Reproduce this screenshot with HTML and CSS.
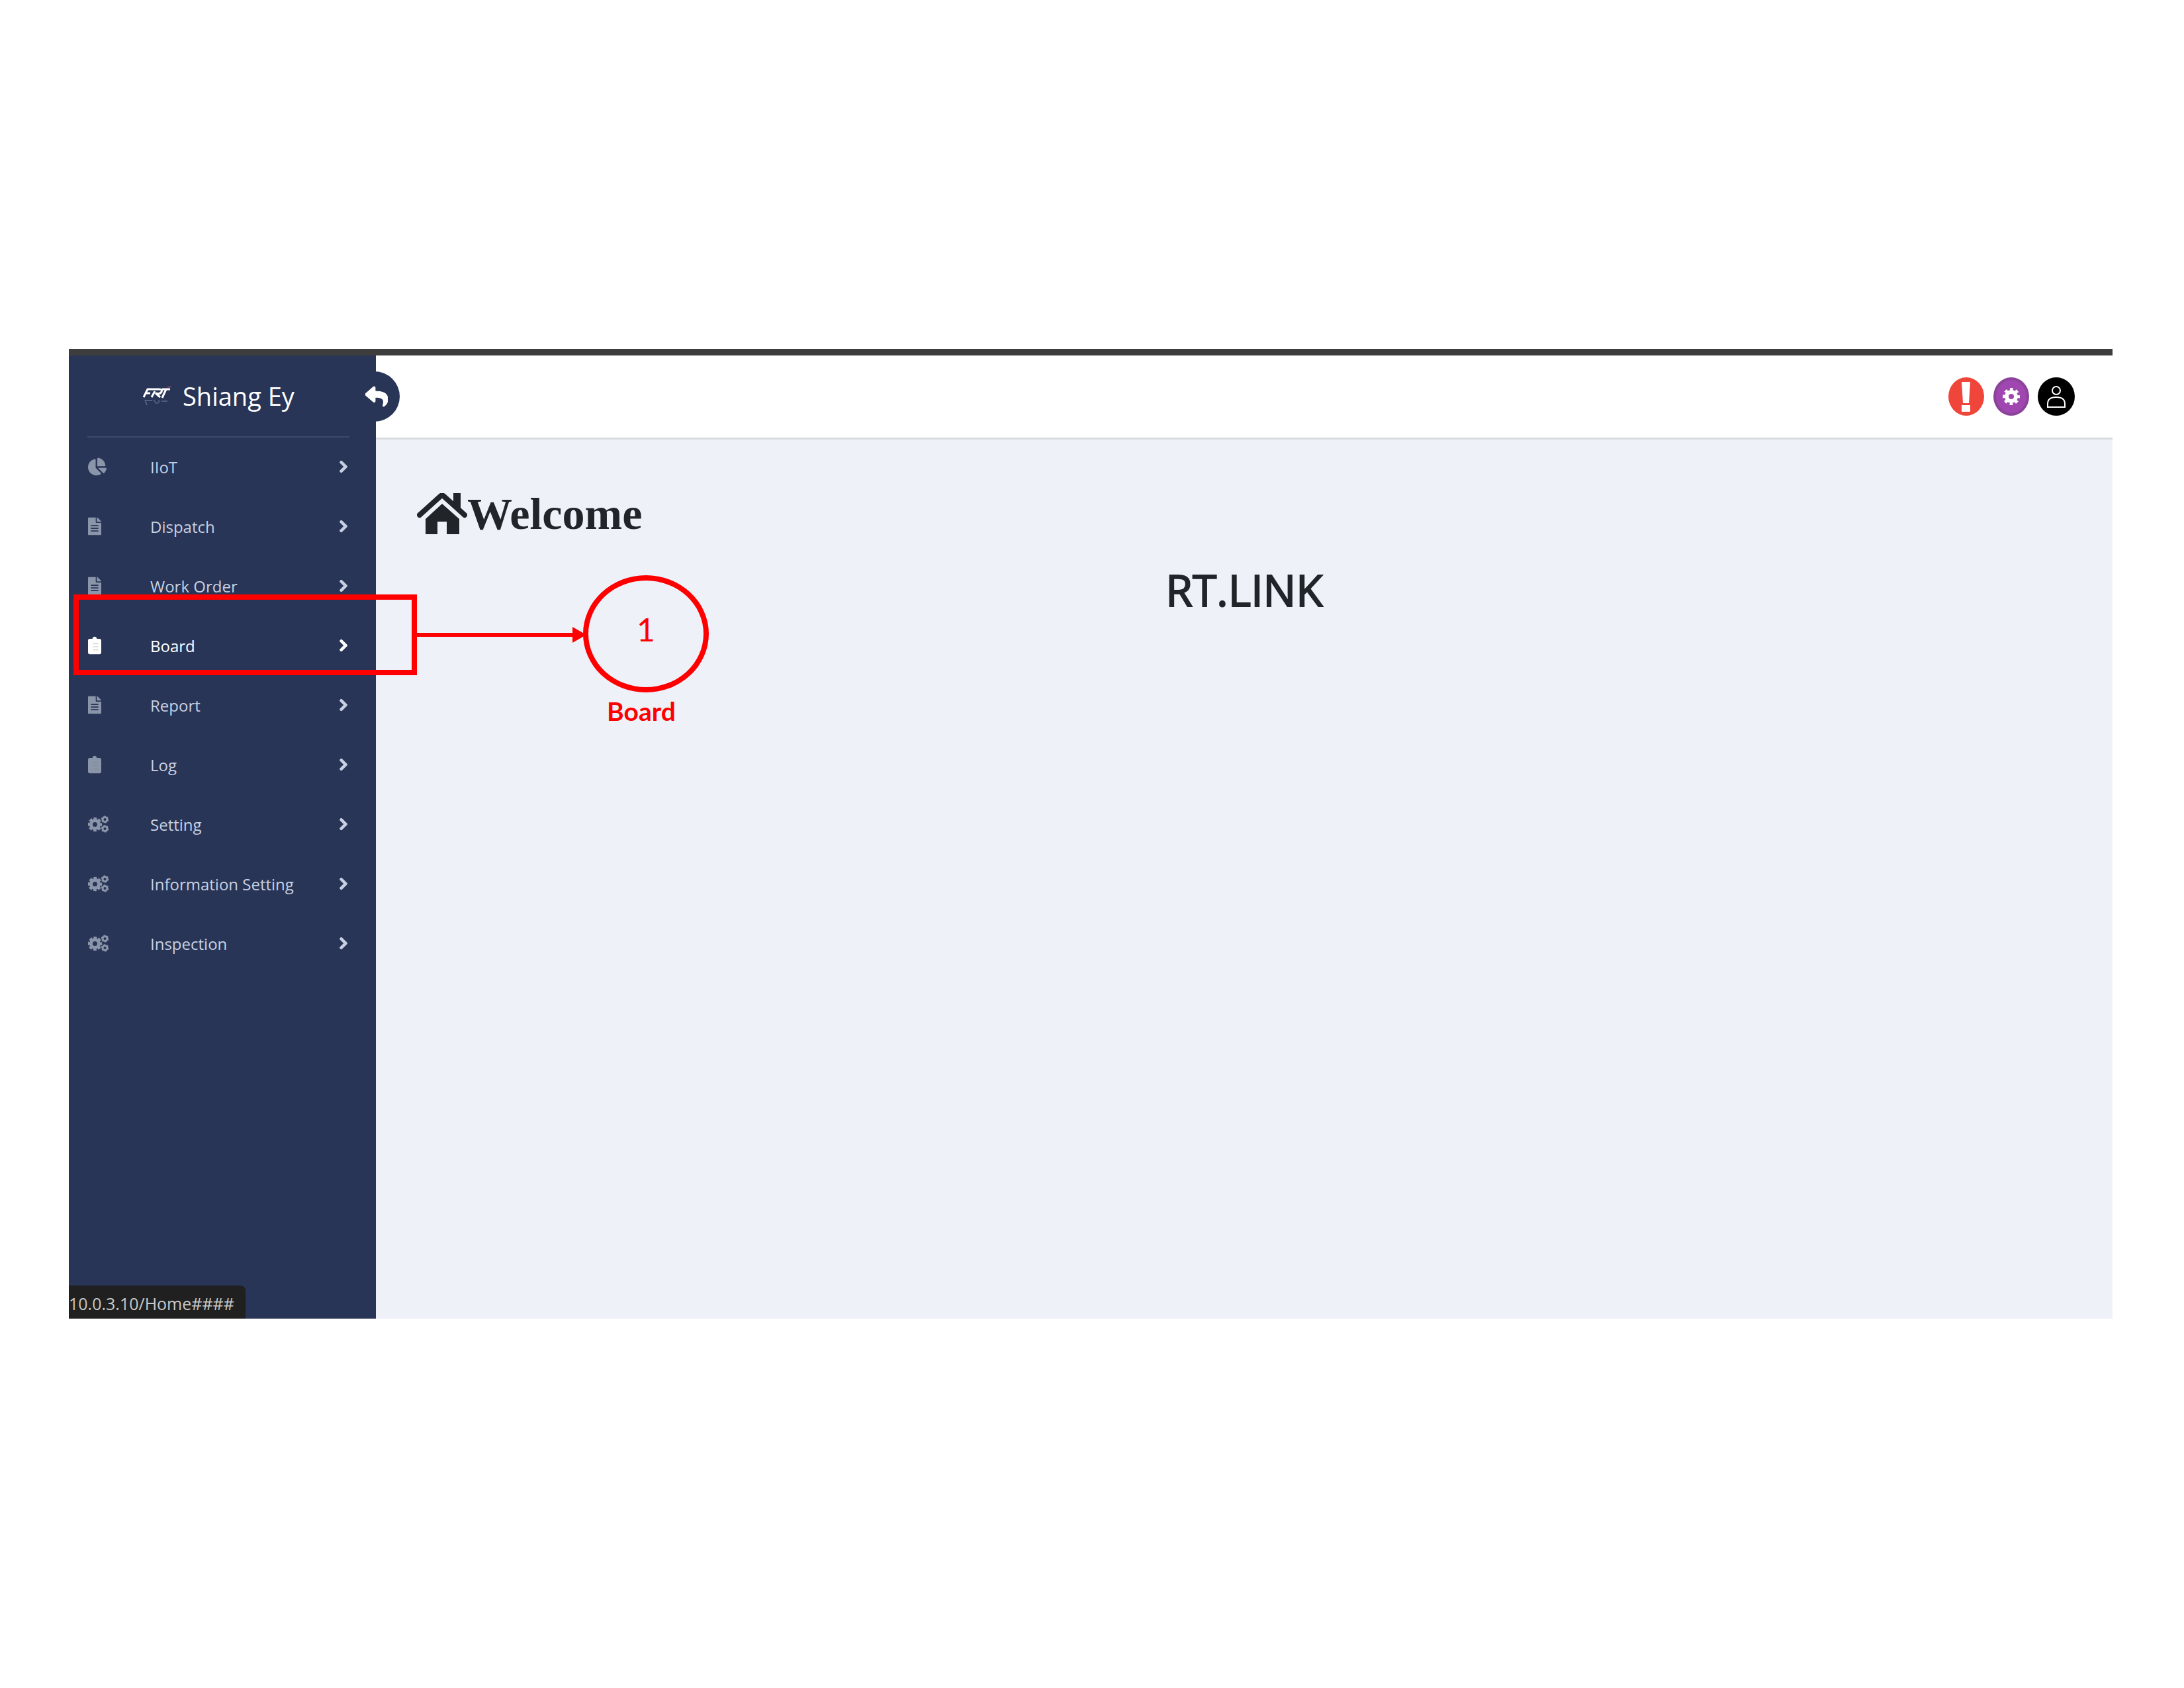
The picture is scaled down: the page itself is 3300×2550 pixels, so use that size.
FILE: index.html
```
<!DOCTYPE html>
<html lang="en">
<head>
<meta charset="utf-8">
<title>RT.LINK - Home</title>
<link rel="stylesheet" href="styles.css">
</head>
<body>
<svg class="sprite" aria-hidden="true">
  <symbol id="pie" viewBox="0 0 544 512"><path d="M527.79 288H290.5l158.03 158.03c6.04 6.04 15.98 6.53 22.19.68 38.7-36.46 65.32-85.61 73.13-140.86 1.34-9.46-6.51-17.85-16.06-17.85zm-15.83-64.8C503.72 103.74 408.26 8.28 288.8.04 279.68-.59 272 7.1 272 16.24V240h223.77c9.14 0 16.82-7.68 16.19-16.8zM224 288V50.71c0-9.55-8.39-17.4-17.84-16.06C86.99 51.49-4.1 155.6.14 280.37 4.5 408.51 114.83 513.59 243.03 511.98c50.4-.63 96.97-16.87 135.26-44.03 7.9-5.6 8.42-17.23 1.57-24.08L224 288z"/></symbol>
  <symbol id="file" viewBox="0 0 384 512"><path d="M224 136V0H24C10.7 0 0 10.7 0 24v464c0 13.3 10.7 24 24 24h336c13.3 0 24-10.7 24-24V160H248c-13.2 0-24-10.8-24-24zm76 240v32H84v-32zm0-76v32H84v-32zm0-76v32H84v-32zM384 121.900v6.100H256V0h6.100c6.400 0 12.500 2.500 17 7l97.900 98c4.500 4.500 7 10.600 7 16.900z"/></symbol>
  <symbol id="clip" viewBox="0 0 384 512"><path d="M384 112v352c0 26.510-21.490 48-48 48H48c-26.510 0-48-21.490-48-48V112c0-26.510 21.490-48 48-48h80c0-35.290 28.710-64 64-64s64 28.710 64 64h80c26.510 0 48 21.490 48 48z"/><path class="clip-lines" d="M150 190h150v30H150zM150 280h150v30H150zM150 370h150v30H150z"/></symbol>
  <symbol id="chev" viewBox="0 0 320 512"><path d="M285.476 272.971L91.132 467.314c-9.373 9.373-24.569 9.373-33.941 0l-22.667-22.667c-9.357-9.357-9.375-24.522-.04-33.901L188.505 256 34.484 101.255c-9.335-9.379-9.317-24.544.04-33.901l22.667-22.667c9.373-9.373 24.569-9.373 33.941 0L285.475 239.030c9.373 9.372 9.373 24.568.001 33.941z" stroke="currentColor" stroke-width="36"/></symbol>
  <symbol id="gears" viewBox="0 0 64 52">
    <g fill="none" stroke="currentColor">
      <circle cx="21" cy="27" r="12" stroke-width="10"/>
      <circle cx="21" cy="27" r="18" stroke-width="7" stroke-dasharray="9.400 4.737" stroke-dashoffset="4.700"/>
      <circle cx="51" cy="12" r="7" stroke-width="6"/>
      <circle cx="51" cy="12" r="10" stroke-width="3" stroke-dasharray="5 5.472"/>
      <circle cx="51" cy="40" r="7" stroke-width="6"/>
      <circle cx="51" cy="40" r="10" stroke-width="3" stroke-dasharray="5 5.472"/>
    </g>
  </symbol>
</svg>

<div class="app">
  <aside class="sidebar">
    <div class="brand">
      <svg class="logo" viewBox="0 0 44 32" aria-hidden="true">
        <g fill="none" stroke="#fff" stroke-width="3">
          <path d="M1 18L7 6h10M5 12h6"/>
          <path d="M13 18l5-9M17 6h8q5 0 3 4t-9 2l7 6"/>
          <path d="M29 6h12M35 6l-6 13"/>
        </g>
        <g fill="none" stroke="#7d88a8" stroke-width="2" opacity=".5">
          <path d="M3 22l3 8M4 23h10M16 22l4 5q6 0 4-5M28 24h9"/>
        </g>
        <path d="M36 3l7-2-3 4z" fill="#8a4a6c"/>
      </svg>
      <span>Shiang Ey</span>
      <button class="collapse" aria-label="Collapse menu"><svg viewBox="0 0 512 512"><path d="M8.309 189.836L184.313 37.851C199.719 24.546 224 35.347 224 56.015v80.053c160.629 1.839 288 34.032 288 186.258 0 61.441-39.581 122.309-83.333 154.132-13.653 9.931-33.111-2.533-28.077-18.631 45.344-145.012-21.507-183.510-176.590-185.742V360c0 20.700-24.300 31.453-39.687 18.164l-176.004-152c-11.071-9.562-11.086-26.753 0-36.328z" stroke="currentColor" stroke-width="16"/></svg></button>
    </div>
    <nav>
      <ul class="menu">
        <li><a href="#"><svg class="icon wide"><use href="#pie"/></svg><span>IIoT</span><svg class="chev"><use href="#chev"/></svg></a></li>
        <li><a href="#"><svg class="icon"><use href="#file"/></svg><span>Dispatch</span><svg class="chev"><use href="#chev"/></svg></a></li>
        <li><a href="#"><svg class="icon"><use href="#file"/></svg><span>Work Order</span><svg class="chev"><use href="#chev"/></svg></a></li>
        <li class="active"><a href="#"><svg class="icon"><use href="#clip"/></svg><span>Board</span><svg class="chev"><use href="#chev"/></svg></a>
          <div class="marker">
            <svg class="arrow" viewBox="0 0 264 24" aria-hidden="true"><path d="M0 9h243V0l21 12-21 12v-9H0z"/></svg>
            <div class="step">1</div>
            <div class="step-name">Board</div>
          </div>
        </li>
        <li><a href="#"><svg class="icon"><use href="#file"/></svg><span>Report</span><svg class="chev"><use href="#chev"/></svg></a></li>
        <li><a href="#"><svg class="icon"><use href="#clip"/></svg><span>Log</span><svg class="chev"><use href="#chev"/></svg></a></li>
        <li><a href="#"><svg class="icon gears"><use href="#gears"/></svg><span>Setting</span><svg class="chev"><use href="#chev"/></svg></a></li>
        <li><a href="#"><svg class="icon gears"><use href="#gears"/></svg><span>Information Setting</span><svg class="chev"><use href="#chev"/></svg></a></li>
        <li><a href="#"><svg class="icon gears"><use href="#gears"/></svg><span>Inspection</span><svg class="chev"><use href="#chev"/></svg></a></li>
      </ul>
    </nav>
    <div class="status">10.0.3.10/Home####</div>
  </aside>
  <div class="content">
    <header class="topbar">
      <button aria-label="Alerts"><svg viewBox="0 0 56 58"><ellipse cx="28" cy="29" rx="27" ry="29" fill="#f0453a"/><path d="M21 7h13l-2 32h-9zM21 42h13v10H21z" fill="#fff"/></svg></button>
      <button aria-label="Settings"><svg viewBox="0 0 56 58"><ellipse cx="28" cy="29" rx="27" ry="29" fill="#8a4399"/><ellipse cx="28" cy="29" rx="23" ry="25" fill="#a046b0"/><g fill="none" stroke="#fff"><circle cx="28" cy="29" r="7" stroke-width="6"/><circle cx="28" cy="29" r="11" stroke-width="4" stroke-dasharray="4.600 4.040" stroke-dashoffset="2.300"/></g></svg></button>
      <button aria-label="Account"><svg viewBox="0 0 56 58"><ellipse cx="28" cy="29" rx="28" ry="29"/><g fill="none" stroke="#fff" stroke-width="2"><circle cx="28" cy="20" r="6"/><path d="M15 45v-5q0-10 13-10t13 10v5z"/></g></svg></button>
    </header>
    <main>
      <h1><svg viewBox="0 0 76 62" aria-hidden="true"><path d="M55 0h11v26L55 16z"/><path d="M4 33L35 5q3-3 6 0l31 28" fill="none" stroke="currentColor" stroke-width="8" stroke-linecap="round"/><path d="M38 16l26 23v23H45V43H31v19H13V39z"/></svg>Welcome</h1>
      <p class="product">RT.LINK</p>
    </main>
  </div>
</div>
</body>
</html>
```
FILE: styles.css
```
* { box-sizing: border-box; }

body {
  margin: 0;
  padding: 527px 108px 0 104px;
  background: #fff;
  color: #212529;
  font-family: "Open Sans", "Noto Sans", sans-serif;
}

svg { fill: currentColor; }
.sprite { position: absolute; width: 0; height: 0; }
button { padding: 0; border: 0; background: none; }

.app {
  display: grid;
  grid-template-columns: 464px 1fr;
  min-height: 1465px;
  border-top: 10px solid #3d3d3d;
}

.sidebar {
  display: flex;
  flex-direction: column;
  background: #283556;
}

.brand {
  position: relative;
  display: flex;
  align-items: center;
  gap: 16px;
  height: 124px;
  margin: 0 40px 0 28px;
  padding-left: 84px;
  border-bottom: 2px solid #3e4a68;
  color: #fff;
  font-size: 38px;
}
.logo { width: 44px; height: 32px; }

.collapse {
  position: absolute;
  top: 24px;
  right: -76px;
  display: grid;
  place-items: center;
  width: 76px;
  height: 76px;
  padding-left: 6px;
  border-radius: 50%;
  background: #283556;
  color: #fff;
}
.collapse svg { width: 34px; height: 34px; }

.menu { margin: 0; padding: 0; list-style: none; }
.menu li { position: relative; }
.menu a {
  display: grid;
  grid-template-columns: 94px 1fr 16px;
  align-items: center;
  height: 90px;
  padding: 0 41px 2px 29px;
  color: #c8d0e2;
  font-size: 24px;
  text-decoration: none;
}
.icon { width: 20px; height: 28px; color: #8b95aa; }
.icon.wide { width: 28px; }
.icon.gears { width: 32px; }
.clip-lines { fill: #7d7d6c; opacity: .3; }
.chev { width: 16px; height: 20px; }
.menu .active a, .menu .active .icon { color: #fff; }

/* Guide marker drawn over the current step */
.marker {
  position: absolute;
  z-index: 1;
  top: -33px;
  left: 7px;
  width: 519px;
  height: 122px;
  border: 8px solid #f00;
  color: #f00;
  font-family: Lato, sans-serif;
  text-align: center;
  pointer-events: none;
}
.arrow { position: absolute; top: 41px; left: 503px; width: 264px; height: 24px; }
.step {
  position: absolute;
  top: -37px;
  left: 762px;
  width: 190px;
  height: 177px;
  border: 8px solid #f00;
  border-radius: 50%;
  font-size: 48px;
  line-height: 148px;
}
.step-name {
  position: absolute;
  top: 142px;
  left: 750px;
  width: 200px;
  font-size: 39px;
  font-weight: 700;
  line-height: 52px;
}

.status {
  align-self: flex-start;
  width: 267px;
  height: 50px;
  margin-top: auto;
  border-top-right-radius: 8px;
  background: #202020;
  color: #c9c9c9;
  font-size: 25px;
  line-height: 54px;
  white-space: nowrap;
}

.content { background: #eff1f9; }
.topbar {
  display: flex;
  justify-content: flex-end;
  align-items: center;
  gap: 12px;
  height: 127px;
  padding-right: 57px;
  border-bottom: 3px solid #d9dadf;
  background: #fff;
}
.topbar button { width: 56px; height: 58px; }
.topbar svg { display: block; width: 56px; height: 58px; }

main { padding: 70px 62px; }
h1 {
  display: flex;
  align-items: center;
  margin: 0;
  font: 700 68px/84px "Liberation Serif", serif;
}
h1 svg { width: 76px; height: 62px; }
.product {
  margin: 24px 0 0;
  font-size: 66px;
  line-height: 96px;
  text-align: center;
  -webkit-text-stroke: 2px currentColor;
}
```
